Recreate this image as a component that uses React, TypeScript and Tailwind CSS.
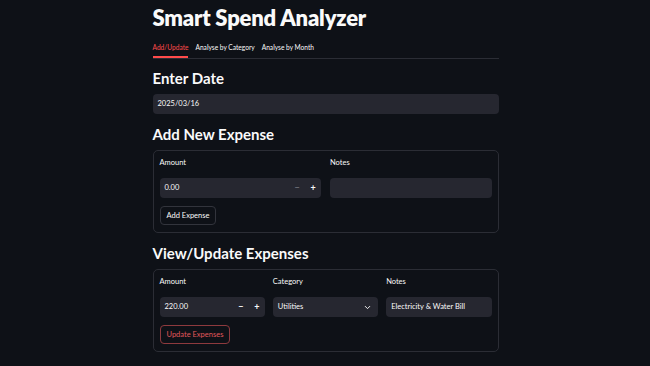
import { ChevronDown } from "lucide-react";

function Label({ text }: { text: string }) {
  return <div className="h-[10px] text-[7.5px] leading-[10px] text-[#fafafa]">{text}</div>;
}

function NumberInput({ value, minDisabled }: { value: string; minDisabled?: boolean }) {
  return (
    <div className="flex h-[20px] items-center rounded-[4px] bg-[#262730]">
      <div className="flex-1 pl-[5px] text-[7.5px] text-[#fafafa]">{value}</div>
      <div
        className={`flex h-full w-[16px] items-center justify-center text-[9px] font-bold ${
          minDisabled ? "text-[#6b6d75]" : "text-[#fafafa]"
        }`}
      >
        −
      </div>
      <div className="flex h-full w-[16px] items-center justify-center text-[9px] font-bold text-[#fafafa]">
        +
      </div>
    </div>
  );
}

function TextInput({ value }: { value?: string }) {
  return (
    <div className="flex h-[20px] items-center rounded-[4px] bg-[#262730] pl-[5px] text-[7.5px] text-[#fafafa]">
      {value}
    </div>
  );
}

export default function App() {
  const tabs = ["Add/Update", "Analyse by Category", "Analyse by Month"];

  return (
    <div
      className="min-h-[366px] w-full bg-[#0e1117] text-[#fafafa]"
      style={{ fontFamily: "Lato, 'Noto Sans', sans-serif" }}
    >
      <div className="mx-auto w-[347px] pl-px">
        <h1 className="h-[38px] text-[22px] font-extrabold leading-[36px] tracking-[-0.2px]">
          Smart Spend Analyzer
        </h1>

        <div className="flex gap-[7px] border-b border-[#2b2d35]">
          {tabs.map((t, i) => (
            <div
              key={t}
              className={`h-[20px] border-b-2 pt-[4px] text-[6.6px] leading-[10px] ${
                i === 0 ? "border-[#ff4b4b] text-[#ff4b4b]" : "border-transparent text-[#fafafa]"
              }`}
            >
              {t}
            </div>
          ))}
        </div>

        <h2 className="mt-[7px] h-[24px] text-[15px] font-bold leading-[24px]">Enter Date</h2>
        <div className="mt-[4px]">
          <TextInput value="2025/03/16" />
        </div>

        <h2 className="mt-[8px] h-[24px] text-[15px] font-bold leading-[24px]">Add New Expense</h2>
        <div className="mt-[4px] rounded-[5px] border border-[#2b2d35] px-[6px] pb-[7px] pt-[7px]">
          <div className="grid grid-cols-2 gap-[9px]">
            <div>
              <Label text="Amount" />
              <div className="mt-[10px]">
                <NumberInput value="0.00" minDisabled />
              </div>
            </div>
            <div>
              <Label text="Notes" />
              <div className="mt-[10px]">
                <TextInput />
              </div>
            </div>
          </div>
          <button className="mt-[8px] h-[19px] rounded-[4px] border border-[#32343c] px-[6px] text-[7.5px] text-[#fafafa]">
            Add Expense
          </button>
        </div>

        <h2 className="mt-[8px] h-[24px] text-[15px] font-bold leading-[24px]">View/Update Expenses</h2>
        <div className="mt-[4px] rounded-[5px] border border-[#2b2d35] px-[6px] pb-[7px] pt-[7px]">
          <div className="grid grid-cols-3 gap-[8px]">
            <div>
              <Label text="Amount" />
              <div className="mt-[10px]">
                <NumberInput value="220.00" />
              </div>
            </div>
            <div>
              <Label text="Category" />
              <div className="mt-[10px] flex h-[20px] items-center justify-between rounded-[4px] bg-[#262730] pl-[5px] pr-[6px] text-[7.5px]">
                <span>Utilities</span>
                <ChevronDown size={9} strokeWidth={2.5} />
              </div>
            </div>
            <div>
              <Label text="Notes" />
              <div className="mt-[10px]">
                <TextInput value="Electricity & Water Bill" />
              </div>
            </div>
          </div>
          <button className="mt-[8px] h-[19px] rounded-[4px] border border-[#8e3a3e] px-[6px] text-[7.5px] text-[#e0585c]">
            Update Expenses
          </button>
        </div>
      </div>
    </div>
  );
}
